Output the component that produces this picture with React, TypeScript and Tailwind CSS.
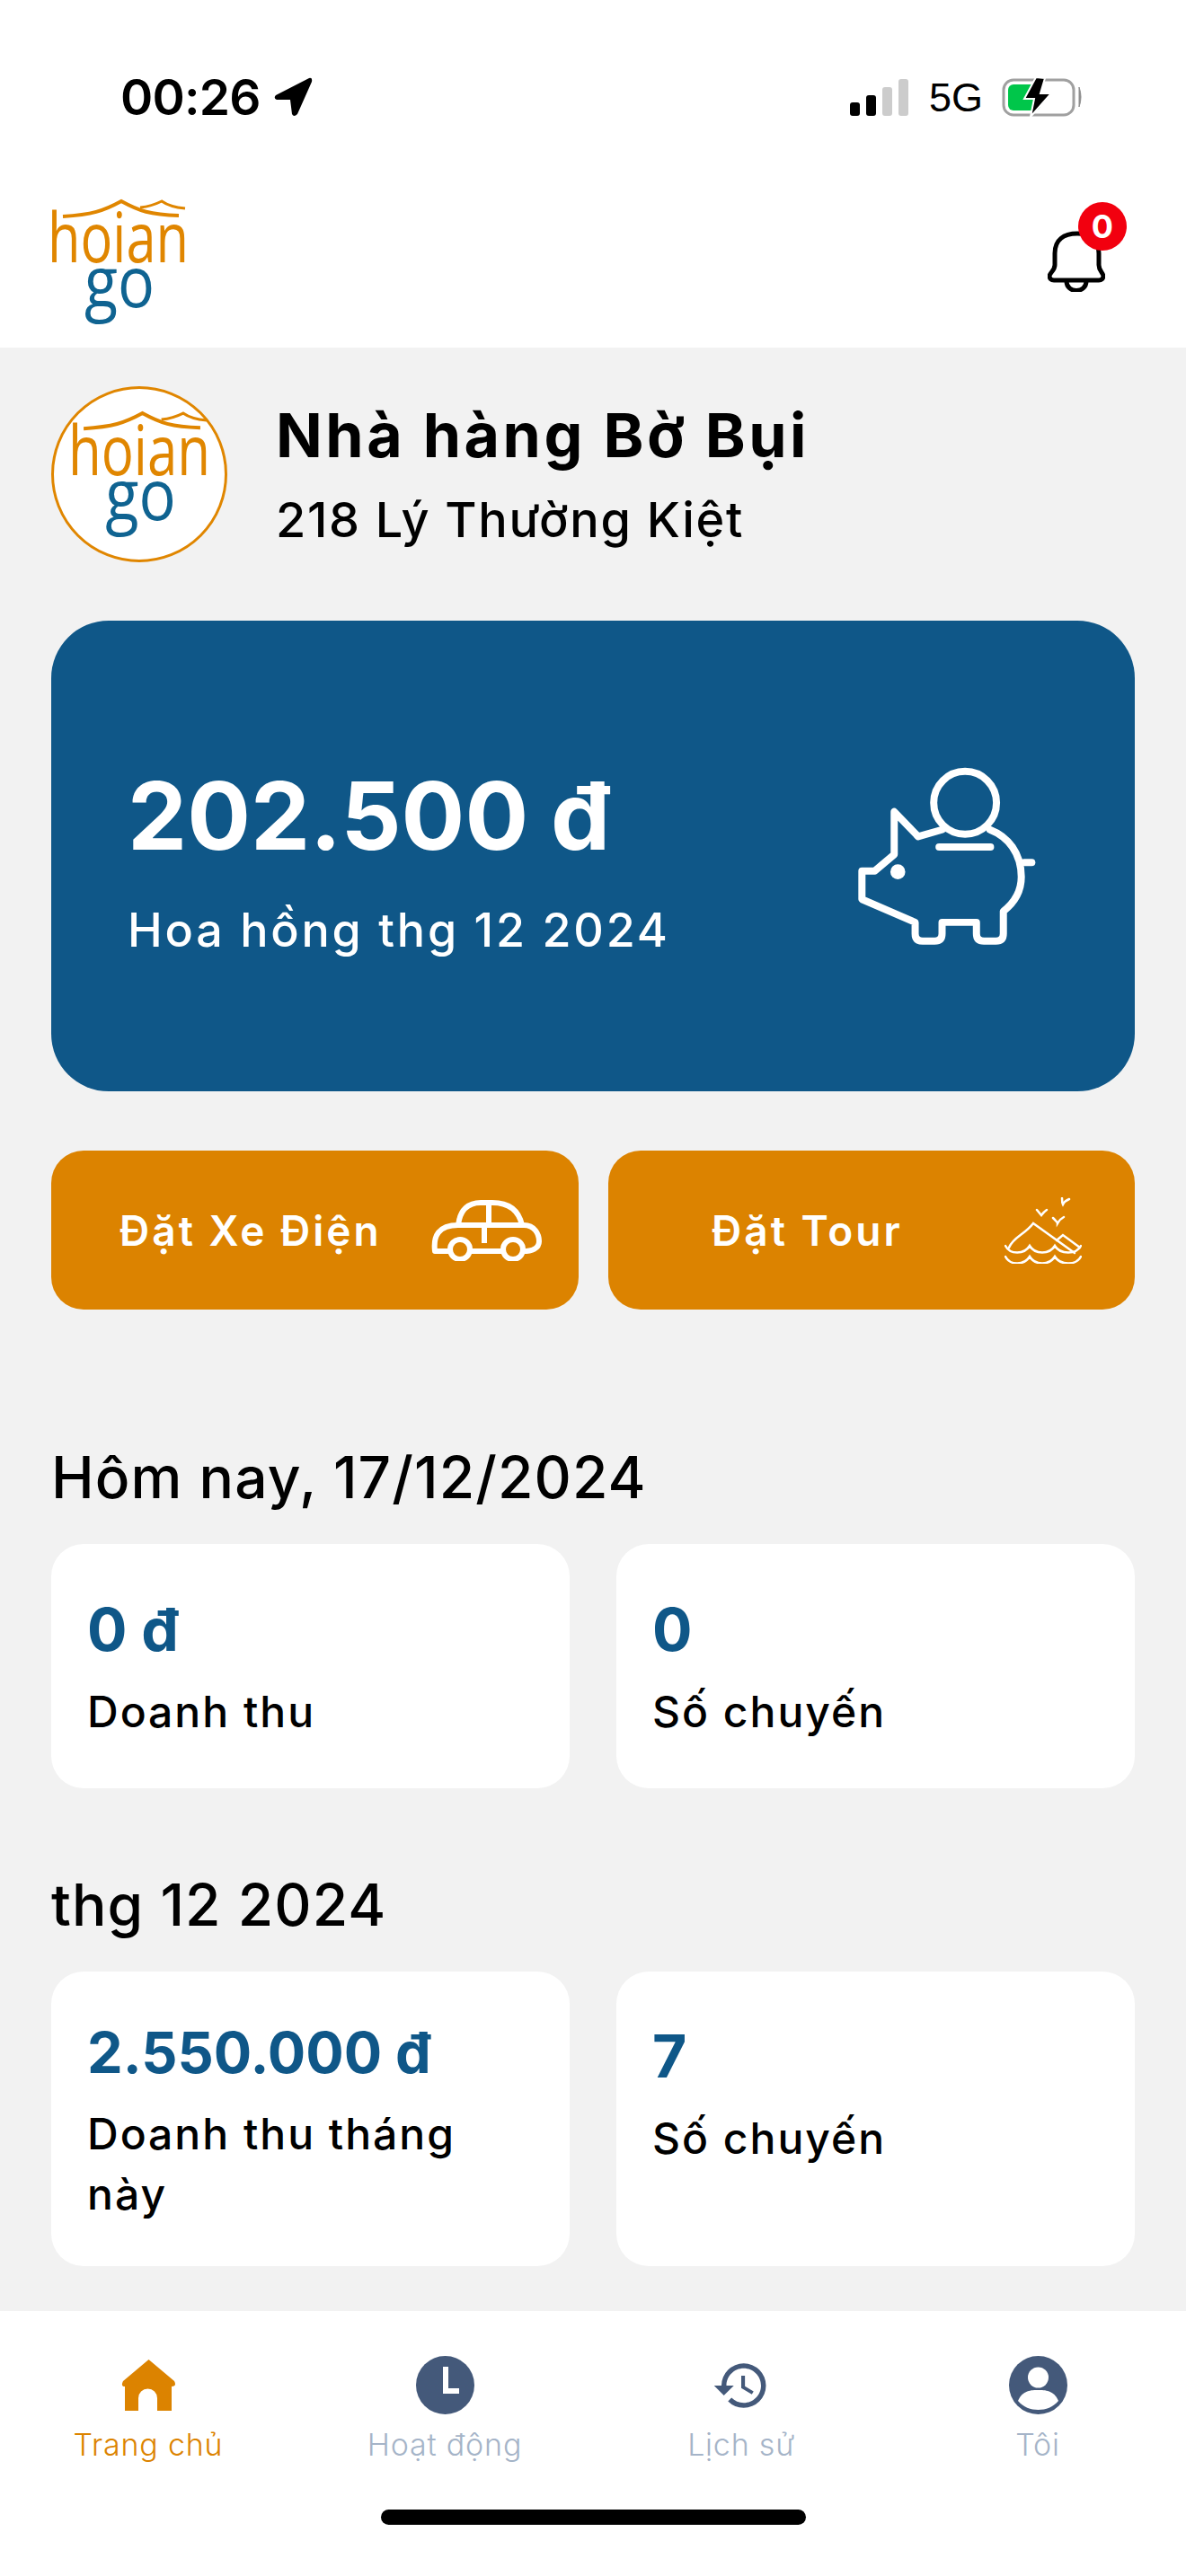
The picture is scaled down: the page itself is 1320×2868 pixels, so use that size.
import { MdHistory } from 'react-icons/md';

function Logo({ className }: { className: string }) {
  return (
    <svg viewBox="0 0 149 140" className={`overflow-visible ${className}`}>
      <path d="M13 19 C45 17 58 13 78 2 C98 13 110 17 142 18" fill="none" stroke="#e08600" strokeWidth="4" />
      <path d="M99 9 C108 8 115 6 123 2 C130 7 138 9 149 10" fill="none" stroke="#e08600" strokeWidth="3" />
      <text x="-4" y="70" fontFamily="Open Sans, sans-serif" fontSize="76" fill="#e08600" textLength="157" lengthAdjust="spacingAndGlyphs">
        hoian
      </text>
      <text x="37" y="120" fontFamily="Open Sans, sans-serif" fontSize="78" fill="#0f6391" textLength="78" lengthAdjust="spacingAndGlyphs">
        go
      </text>
    </svg>
  );
}

function StatusBar() {
  return (
    <div className="flex items-center justify-between pl-[134px] pr-[115px] pt-[80px] h-[136px]">
      <div className="flex items-center gap-[14px]">
        <span className="text-[55px] leading-none font-semibold text-black tracking-[-0.8px]">00:26</span>
        <svg viewBox="0 0 44 44" className="w-[44px] h-[44px]">
          <path d="M40 1 L3 20 Q0 23 4 25 L19 25 L21 41 Q23 45 27 41 L43 5 Q44 0 40 1 Z" fill="#000" />
        </svg>
      </div>
      <div className="flex items-center">
        <div className="flex items-end gap-[7px] h-[41px]">
          <div className="w-[11px] h-[15px] rounded-[3px] bg-black" />
          <div className="w-[11px] h-[23px] rounded-[3px] bg-black" />
          <div className="w-[11px] h-[32px] rounded-[3px] bg-[#cccccc]" />
          <div className="w-[11px] h-[41px] rounded-[3px] bg-[#cccccc]" />
        </div>
        <span className="ml-[23px] text-[45px] leading-none text-black font-['Liberation_Sans',sans-serif]">5G</span>
        <svg viewBox="0 0 90 44" className="ml-[21px] w-[90px] h-[44px]">
          <rect x="2" y="3" width="78" height="39" rx="11" fill="none" stroke="#a0a0a0" strokeWidth="3" />
          <rect x="7" y="8" width="36" height="29" rx="6" fill="#00c64a" />
          <path d="M86 11 Q90 22 86 33 Z" fill="#8e8e8e" stroke="#8e8e8e" strokeWidth="1" />
          <path d="M38 0 L25 24 L36 24 L32 44 L55 18 L43 18 L48 1 Z" fill="#000" stroke="#fff" strokeWidth="2" />
        </svg>
      </div>
    </div>
  );
}

function Bell() {
  return (
    <div className="relative w-[64px] h-[68px]">
      <svg viewBox="0 0 64 68" className="w-[64px] h-[68px]">
        <path
          d="M8 25 C8 10 18 3 33 3 C48 3 57 10 57 25 V38 C57 44 61 46 62 50 C62 53 60 55 57 55 H7 C4 55 2 53 2 50 C3 46 8 44 8 38 Z"
          fill="none"
          stroke="#000"
          strokeWidth="5"
        />
        <path d="M21 56 C21 70 43 70 43 56" fill="none" stroke="#000" strokeWidth="5" />
      </svg>
      <div className="absolute left-[34px] top-[-32px] w-[54px] h-[54px] rounded-full bg-[#f2000f] flex items-center justify-center text-white text-[36px] font-bold leading-none">
        0
      </div>
    </div>
  );
}

function Piggy() {
  return (
    <svg viewBox="150 100 610 600" className="w-[203px] h-[200px]" fill="none" stroke="#fff" strokeWidth="24" strokeLinecap="round" strokeLinejoin="round">
      <circle cx="517" cy="222" r="105" />
      <path d="M440 312 L360 335 L280 252 V395 L215 450 H172 V545 L350 622 V660 Q350 685 375 685 H415 Q440 685 440 660 V622 H555 V660 Q555 685 580 685 H620 Q645 685 645 660 V585 C690 550 705 510 705 470 C705 390 660 335 600 312" />
      <path d="M430 370 H602" />
      <path d="M715 422 H740" />
      <circle cx="292" cy="453" r="25" fill="#fff" stroke="none" />
    </svg>
  );
}

function CarIcon() {
  return (
    <svg viewBox="0 0 123 68" className="w-[123px] h-[68px]" fill="none" stroke="#fff" strokeWidth="6" strokeLinejoin="round">
      <path d="M30 28 C32 10 42 3 55 3 H68 C85 3 97 10 101 28" />
      <path d="M20 57 H4 C2 40 8 28 30 28 H103 C115 28 120 38 120 46 C120 54 112 57 102 57 M44 57 H79" />
      <circle cx="32" cy="55" r="11" />
      <circle cx="91" cy="55" r="11" />
      <path d="M64 3 V28 M59 28 V48" />
    </svg>
  );
}

function TourIcon() {
  return (
    <svg viewBox="0 0 86 74" className="w-[86px] h-[74px]" fill="none" stroke="#fff" strokeWidth="2.5" strokeLinecap="round">
      <path d="M5 56 C10 44 22 42 32 29 L78 62" />
      <path d="M58 48 L65 42 L84 56" />
      <path d="M1 54 C6 64 22 64 28 54 C34 64 50 64 56 54 C62 64 80 64 85 54" />
      <path d="M1 66 C6 76 22 76 28 66 C34 76 50 76 56 66 C62 76 80 76 85 66" />
      <path d="M36 14 Q41 20 41 20 Q44 16 47 14 M64 1 Q64 6 65 8 Q67 4 72 2 M54 23 Q59 28 59 29 Q62 24 66 22" />
    </svg>
  );
}

function StatCard({
  value,
  label,
  className = 'pt-[10px]',
  valueClass = 'text-[66px]',
  labelClass = '',
}: {
  value: string;
  label: string;
  className?: string;
  valueClass?: string;
  labelClass?: string;
}) {
  return (
    <div className={`w-[577px] h-full rounded-[36px] bg-white pl-[40px] flex flex-col justify-center ${className}`}>
      <div className={`font-bold text-[#0f5788] h-[66px] flex items-center ${valueClass}`}>{value}</div>
      <div className={`mt-[24px] text-[48px] font-medium text-black tracking-[2px] leading-[67px] ${labelClass}`}>{label}</div>
    </div>
  );
}

function TabItem({ label, active, children }: { label: string; active?: boolean; children: React.ReactNode }) {
  return (
    <div className="flex-1 flex flex-col items-center">
      <div className="h-[65px] flex items-center justify-center">{children}</div>
      <span className={`mt-[12px] text-[34px] font-light tracking-[0.8px] leading-[44px] ${active ? 'text-[#dc8300]' : 'text-[#a5b4c8]'}`}>{label}</span>
    </div>
  );
}

export default function App() {
  return (
    <div className="w-[1320px] h-[2868px] flex flex-col bg-[#f2f2f2] font-['Inter',sans-serif] overflow-hidden">
      {/* Top */}
      <div className="bg-white h-[387px] shrink-0">
        <StatusBar />
        <div className="flex items-start justify-between pl-[57px] pr-[90px] pt-[86px]">
          <Logo className="w-[149px] h-[140px]" />
          <div className="pt-[35px]">
            <Bell />
          </div>
        </div>
      </div>

      {/* Content */}
      <div className="flex-1 px-[57px] pt-[43px]">
        <div className="flex items-center gap-[54px] h-[196px]">
          <div className="w-[196px] h-[196px] rounded-full border-[3px] border-[#e08600] bg-white flex items-center justify-center">
            <Logo className="w-[150px] h-[141px]" />
          </div>
          <div>
            <div className="text-[68px] font-bold text-black tracking-[3.5px] leading-none">Nhà hàng Bờ Bụi</div>
            <div className="mt-[34px] text-[54px] font-medium text-black tracking-[1.7px] leading-none">218 Lý Thường Kiệt</div>
          </div>
        </div>

        <div className="mt-[65px] h-[524px] rounded-[64px] bg-[#0f5788] flex items-center justify-between pl-[85px] pr-[108px]">
          <div className="text-white pt-[10px]">
            <div className="text-[105px] font-bold leading-none">202.500 đ</div>
            <div className="mt-[50px] text-[52px] font-medium tracking-[2.8px] leading-none">Hoa hồng thg 12 2024</div>
          </div>
          <Piggy />
        </div>

        <div className="mt-[66px] flex gap-[33px]">
          <div className="w-[587px] h-[177px] rounded-[36px] flex items-center justify-between bg-[#dc8300] pl-[76px] pr-[41px]">
            <span className="text-[46px] font-semibold text-white tracking-[3px] leading-none">Đặt Xe Điện</span>
            <CarIcon />
          </div>
          <div className="w-[586px] h-[177px] rounded-[36px] flex items-center justify-between bg-[#dc8300] pl-[115px] pr-[59px]">
            <span className="text-[46px] font-semibold text-white tracking-[3px] leading-none">Đặt Tour</span>
            <TourIcon />
          </div>
        </div>

        <h2 className="mt-[155px] text-[64px] font-medium text-black tracking-[1.1px] leading-none">Hôm nay, 17/12/2024</h2>
        <div className="mt-[42px] h-[272px] flex justify-between">
          <StatCard value="0 đ" label="Doanh thu" />
          <StatCard value="0" label="Số chuyến" />
        </div>

        <h2 className="mt-[98px] text-[64px] font-medium text-black tracking-[1.1px] leading-none">thg 12 2024</h2>
        <div className="mt-[42px] h-[328px] flex justify-between">
          <StatCard value="2.550.000 đ" label="Doanh thu tháng này" valueClass="text-[63px]" labelClass="w-[470px]" />
          <StatCard value="7" label="Số chuyến" className="pb-[48px]" />
        </div>
      </div>

      {/* Bottom tabs */}
      <div className="bg-white h-[295px] shrink-0 flex flex-col items-center">
        <div className="w-full flex pt-[50px]">
          <TabItem label="Trang chủ" active>
            <svg viewBox="0 0 61 57" className="w-[61px] h-[57px]">
              <path d="M30.5 0 L59 24 Q62 30 56 30 V57 H40 V43 A10.500 10.500 0 0 0 19 43 V57 H4 V30 Q-1 30 2 24 Z" fill="#dc8300" />
            </svg>
          </TabItem>
          <TabItem label="Hoạt động">
            <svg viewBox="0 0 65 65" className="w-[65px] h-[65px]">
              <circle cx="32.500" cy="32.500" r="32.500" fill="#44597a" />
              <path d="M33 12 V39 H48" fill="none" stroke="#fff" strokeWidth="6" />
            </svg>
          </TabItem>
          <TabItem label="Lịch sử">
            <MdHistory size={66} color="#44597a" />
          </TabItem>
          <TabItem label="Tôi">
            <svg viewBox="0 0 65 65" className="w-[65px] h-[65px]">
              <circle cx="32.500" cy="32.500" r="32.500" fill="#44597a" />
              <circle cx="32.500" cy="24" r="11.500" fill="#fff" />
              <path d="M10 50 C15 38 25 38 32.500 38 C40 38 50 38 55 50 C49 57 41 60 32.500 60 C24 60 16 57 10 50 Z" fill="#fff" />
            </svg>
          </TabItem>
        </div>
        <div className="mt-[50px] w-[473px] h-[17px] rounded-full bg-black" />
      </div>
    </div>
  );
}
